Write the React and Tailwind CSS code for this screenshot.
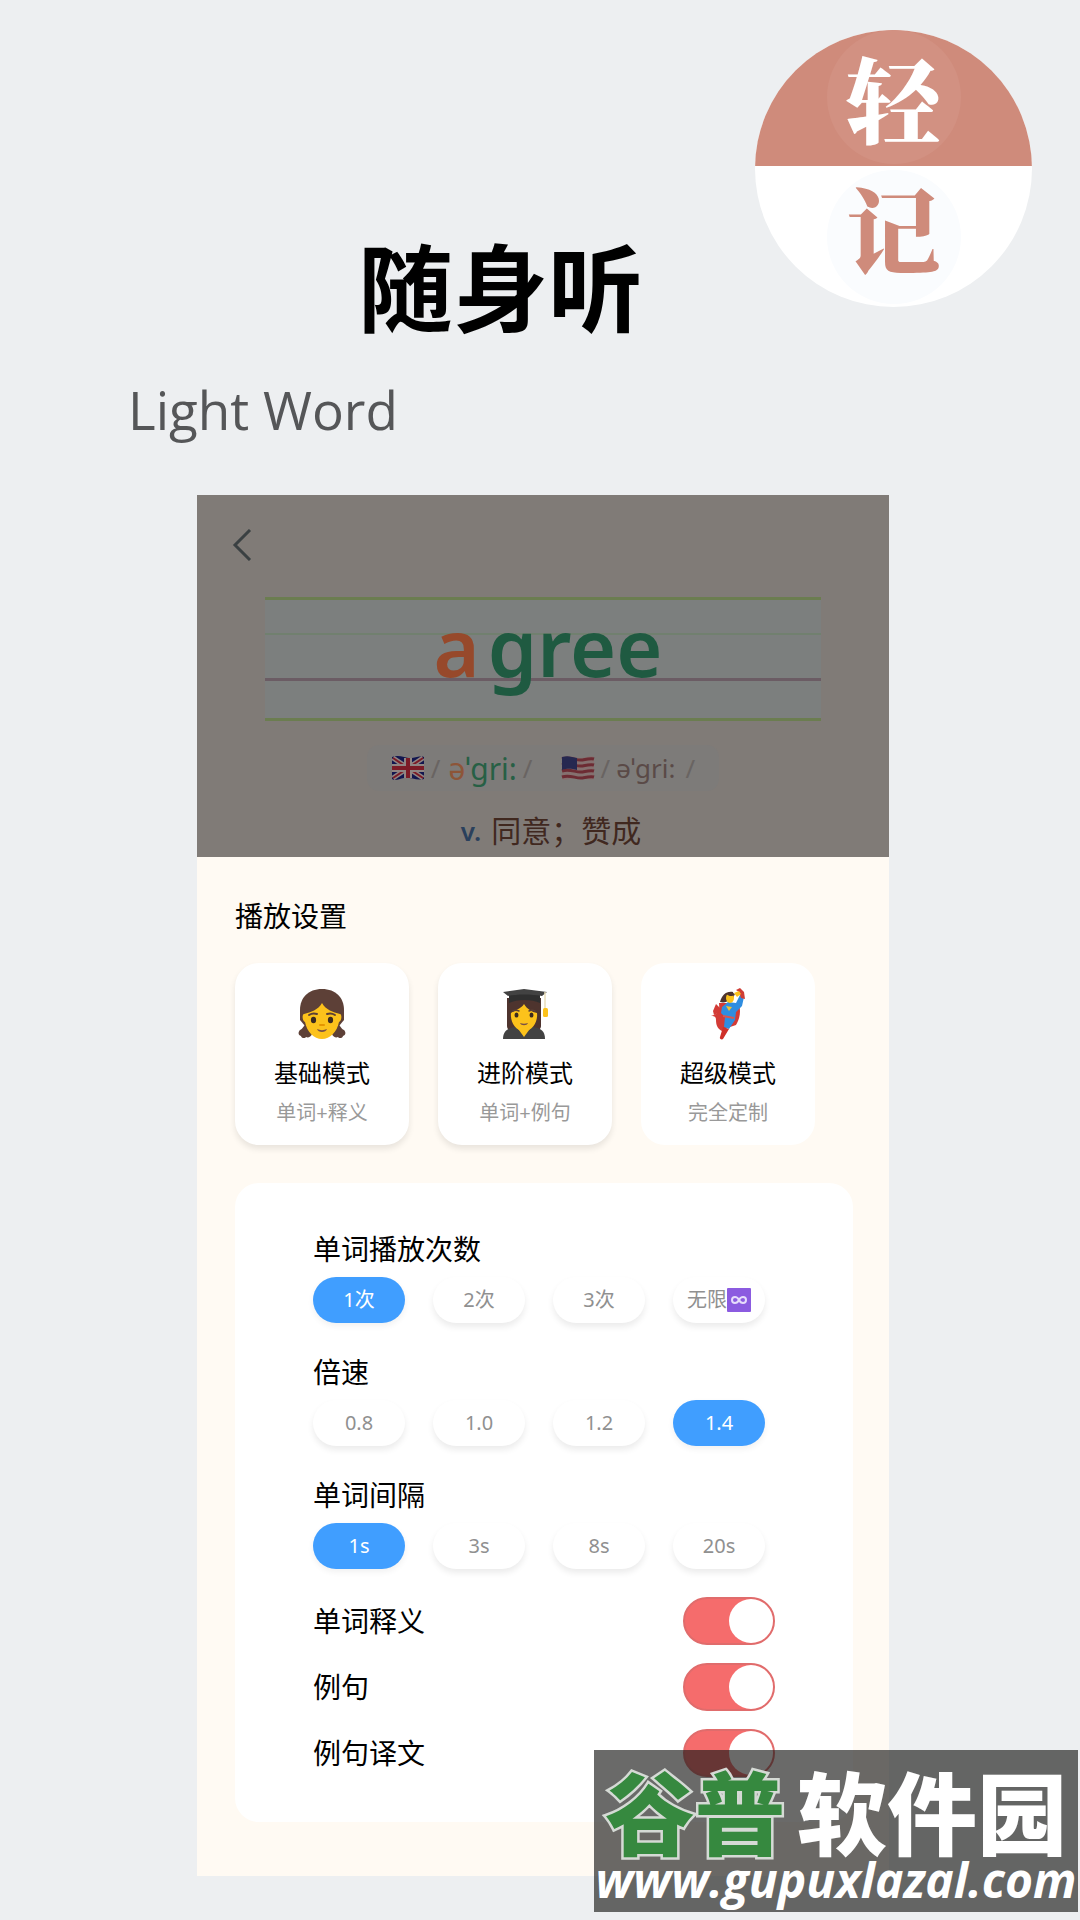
import React, { useState } from 'react';

const GirlIcon = () => (
    <svg viewBox="0 0 52 52" className="h-[52px] w-[52px]" aria-hidden="true">
        <path d="M4 42c3-1 4-6 7-6s6 6 5 10c-1 3-4 4-6 3-1 2-5 1-5-1-3-1-3-4-1-6z" fill="#5d4037" />
        <path d="M48 42c-3-1-4-6-7-6s-6 6-5 10c1 3 4 4 6 3 1 2 5 1 5-1 3-1 3-4 1-6z" fill="#5d4037" />
        <path d="M26 1C12 1 4 10 4 22v10l5 6h34l5-6V22C48 10 40 1 26 1z" fill="#5d4037" />
        <path d="M26 15c-4 7-11 9-18 11-2 0-2 7 1 8 2 10 9 17 17 17s15-7 17-17c3-1 3-8 1-8-7-2-14-4-18-11z" fill="#fcc21b" />
        <path d="M13 27c3-2 5-2 8-1M31 26c3-1 5-1 8 1" stroke="#5d4037" strokeWidth="2" fill="none" strokeLinecap="round" />
        <ellipse cx="17.500" cy="32" rx="2.600" ry="3.200" fill="#3b2a20" />
        <ellipse cx="34.500" cy="32" rx="2.600" ry="3.200" fill="#3b2a20" />
        <path d="M24 37h4" stroke="#e59600" strokeWidth="2" strokeLinecap="round" />
        <path d="M21 41c3 1.500 7 1.500 10 0-1 4-9 4-10 0z" fill="#795046" />
    </svg>
);

const StudentIcon = () => (
    <svg viewBox="0 0 52 52" className="h-[52px] w-[52px]" aria-hidden="true">
        <path d="M8 10h34v28c0 3-3 5-6 5H14c-4 0-6-2-6-5z" fill="#4e342e" />
        <path d="M4 51c0-8 5-11 12-12h18c8 1 12 4 12 12z" fill="#424242" />
        <path d="M17 38h16l-8 11z" fill="#fcc21b" />
        <path d="M25 16c-3 5-9 6-13 9-1 8 4 18 13 18s14-10 13-18c-5-1-10-4-13-9z" fill="#fcc21b" />
        <path d="M14 23c2-1 4-1 6 0M30 23c2-1 4-1 6 0" stroke="#5d4037" strokeWidth="1.500" fill="none" strokeLinecap="round" />
        <ellipse cx="17.500" cy="27" rx="2" ry="2.500" fill="#3b2a20" />
        <ellipse cx="32.500" cy="27" rx="2" ry="2.500" fill="#3b2a20" />
        <path d="M21 35c3 1 5 1 8 0-1 3-7 3-8 0z" fill="#795046" />
        <path d="M10 6h31v9c-8-4-23-4-31 0z" fill="#2f2f2f" />
        <path d="M4 4l21-3 23 3-5 4c-10-2-26-2-34 0z" fill="#424242" />
        <path d="M46 4v18" stroke="#e8dcb8" strokeWidth="1.500" />
        <rect x="44" y="20" width="5" height="9" rx="1.500" fill="#fcc21b" />
    </svg>
);

const HeroIcon = () => (
    <svg viewBox="0 0 52 52" className="h-[52px] w-[52px]" aria-hidden="true">
        <path d="M17 15c0 3 1 5-1 8-1 3-4 4-7 5 4 0 5 1 5 4 0 6 2 9 6 11l5-3 9-3c4-7 5-13 3-22z" fill="#d33b36" />
        <path d="M14 16l-3 7 1 4 4-2 3-4z" fill="#d33b36" />
        <path d="M31 4c-7-1-11 3-13 10 4 1 7 0 9-2l5-3z" fill="#4e342e" />
        <path d="M26 14l8 1 4-8 4 2-2 9-6 6-1 8-6 9-5-2 1-10-4-4 1-6z" fill="#2f8de0" />
        <path d="M37 4l-3-2 4-2 4 4 1 7-4-1z" fill="#cf3d35" />
        <path d="M32 5l5-2 2 3-4 3z" fill="#fcc21b" />
        <ellipse cx="28" cy="10" rx="4" ry="5" fill="#fcc21b" />
        <path d="M24 6c3-3 8-2 9 1-4 2-6 1-9-1z" fill="#4e342e" />
        <path d="M24 18l6 1-3 4z" fill="#f2c232" />
        <path d="M21 28l11 2" stroke="#d9574f" strokeWidth="2" />
        <path d="M21 39l6 2-6 10c-1 1-4 0-3-2z" fill="#cf3029" />
    </svg>
);

const UkFlag = () => (
    <svg viewBox="0 0 34 26" className="h-[26px] w-[34px]" role="img" aria-label="UK">
        <path d="M1 2c8-3 14 2 20 1 5-1 9-2 12-1v22c-8 2-13-2-20-1-5 1-9 3-12 1z" fill="#12164f" />
        <path d="M2 3l30 20M32 3L2 23" stroke="#8f8583" strokeWidth="5" />
        <path d="M2 3l30 20M32 3L2 23" stroke="#7c1b26" strokeWidth="2" />
        <path d="M17 3v20M1 13h32" stroke="#8f8583" strokeWidth="8" />
        <path d="M17 3v20M1 13h32" stroke="#7c1b26" strokeWidth="4" />
    </svg>
);

const UsFlag = () => (
    <svg viewBox="0 0 34 26" className="h-[26px] w-[34px]" role="img" aria-label="US">
        <path d="M1 2c8-3 14 2 20 1 5-1 9-2 12-1v22c-8 2-13-2-20-1-5 1-9 3-12 1z" fill="#85706f" />
        <path
            d="M1 4c8-3 14 2 20 1 5-1 9-2 12-1M1 10c8-3 14 2 20 1 5-1 9-2 12-1M1 16c8-3 14 2 20 1 5-1 9-2 12-1M1 22c8-3 14 2 20 1 5-1 9-2 12-1"
            stroke="#6d2b33"
            strokeWidth="3"
            fill="none"
        />
        <path d="M1 2c6-2 10 0 15 1v12c-5-1-9-2-15 0z" fill="#262850" />
    </svg>
);

const InfinityIcon = () => (
    <svg viewBox="0 0 24 24" className="h-6 w-6" role="img" aria-label="∞">
        <rect width="24" height="24" rx="1" fill="#8b5be0" />
        <path
            d="M12 12c-1-2-2-3-4-3a3 3 0 0 0 0 6c2 0 3-1 4-3s2-3 4-3a3 3 0 0 1 0 6c-2 0-3-1-4-3z"
            fill="none"
            stroke="#e6dcfb"
            strokeWidth="2"
        />
    </svg>
);

const modes = [
    { id: 'basic', name: '基础模式', desc: '单词+释义', icon: GirlIcon, raised: true },
    { id: 'advanced', name: '进阶模式', desc: '单词+例句', icon: StudentIcon, raised: true },
    { id: 'super', name: '超级模式', desc: '完全定制', icon: HeroIcon, raised: false }
];

const optionGroups = [
    { key: 'times', title: '单词播放次数', options: ['1次', '2次', '3次', '无限'] },
    { key: 'speed', title: '倍速', options: ['0.8', '1.0', '1.2', '1.4'] },
    { key: 'interval', title: '单词间隔', options: ['1s', '3s', '8s', '20s'] }
];

const switches = [
    { key: 'meaning', label: '单词释义' },
    { key: 'sentence', label: '例句' },
    { key: 'translation', label: '例句译文' }
];

const Logo = () => (
    <div className="flex h-[277px] w-[277px] shrink-0 flex-col overflow-hidden rounded-full bg-white text-[94px] font-black font-['Noto_Serif_CJK_SC','Noto_Sans_CJK_SC',serif]">
        <div className="flex h-[136px] justify-center bg-[#cf8b7b] text-white">
            <span className="h-[134px] w-[134px] rounded-full bg-[#d29182] text-center leading-[134px]">轻</span>
        </div>
        <div className="flex flex-1 justify-center pt-1 text-[#cf8b7b]">
            <span className="h-[134px] w-[134px] rounded-full bg-[#fafcfe] text-center leading-[116px]">记</span>
        </div>
    </div>
);

const WordPanel = () => (
    <section className="bg-[#807b77] px-[34px] pt-[34px] pb-[6px]">
        <button type="button" aria-label="返回" className="block h-8 w-6">
            <svg viewBox="0 0 24 32" className="h-8 w-6" fill="none" stroke="#3a4042" strokeWidth="3">
                <path d="M19 1L4 16l15 15" />
            </svg>
        </button>

        <div className="relative mx-[34px] mt-9 h-[124px] bg-[#7c7f7e]">
            <div className="absolute inset-0 flex flex-col border-y-3 border-[#6b7d50]">
                <div className="h-[35px] border-b-2 border-[#71806f]" />
                <div className="h-[46px] border-b-3 border-[#6b5c64]" />
            </div>
            <h2 className="relative flex justify-center gap-2 pl-[10px] text-[79px] leading-[100px] font-semibold text-[#1f5a41]">
                <span className="text-[#97492b]">a</span>
                <span>gree</span>
            </h2>
        </div>

        <div className="mx-auto mt-6 flex h-[46px] w-fit items-center rounded-xl bg-[#7d7b79] px-6 text-[26px] text-[#5a4a47]">
            <UkFlag />
            <span className="ml-[6px] text-[#696462]">/</span>
            <span className="ml-2 text-[30px] text-[#276045]"><span className="text-[#8d5538]">ə</span>ˈgri:</span>
            <span className="ml-[6px] text-[#696462]">/</span>
            <span className="ml-[28px] flex"><UsFlag /></span>
            <span className="ml-[6px] text-[#696462]">/</span>
            <span className="ml-[6px]">əˈgri:</span>
            <span className="ml-[10px] text-[#696462]">/</span>
        </div>

        <p className="mt-[20px] flex justify-center gap-[10px] pl-4 text-[30px] leading-10 text-[#40281f]">
            <span className="text-[26px] font-semibold text-[#2a405c]">v.</span>
            <span>同意；赞成</span>
        </p>
    </section>
);

const OptionGroup = ({ group, value, onSelect }) => (
    <div role="group" aria-label={group.title}>
        <h3 className="text-[28px] leading-10">{group.title}</h3>
        <div className="mt-2 flex gap-7">
            {group.options.map(option => (
                <button
                    key={option}
                    type="button"
                    aria-pressed={value === option}
                    onClick={() => onSelect(option)}
                    className={`flex h-[46px] w-[92px] items-center justify-center rounded-full text-[20px] whitespace-nowrap ${
                        value === option
                            ? 'bg-[#409eff] text-white shadow-[0_3px_6px_rgba(0,0,0,0.06)]'
                            : 'bg-white text-[#909090] shadow-[0_4px_6px_rgba(0,0,0,0.08)]'
                    }`}
                >
                    {option}
                    {option === '无限' && <InfinityIcon />}
                </button>
            ))}
        </div>
    </div>
);

const Watermark = () => (
    <div className="absolute right-[2px] bottom-2 flex h-[162px] w-[484px] flex-col items-center bg-[#1a1a18]/65 pt-[18px] text-white">
        <p className="flex gap-3 text-[90px] leading-[90px] font-black">
            <span className="text-[#36893f] [-webkit-text-stroke:5px_#d5dad5] [paint-order:stroke_fill]">谷普</span>
            <span>软件园</span>
        </p>
        <p className="text-[48px] leading-[44px] font-bold italic font-['Open_Sans',sans-serif]">www.gupuxlazal.com</p>
    </div>
);

const App = () => {
    const [mode, setMode] = useState('super');
    const [selected, setSelected] = useState({ times: '1次', speed: '1.4', interval: '1s' });
    const [enabled, setEnabled] = useState({ meaning: true, sentence: true, translation: true });

    return (
        <div className="relative min-h-screen bg-[#edeff1] pb-11 text-black font-['Noto_Sans','Noto_Sans_CJK_SC',sans-serif]">
            <header className="flex h-[495px] justify-between pr-12">
                <div className="pt-[238px] pl-[128px]">
                    <h1 className="ml-[230px] text-[95px] leading-[100px] font-bold">随身听</h1>
                    <p className="mt-9 text-[53px] leading-[72px] text-[#555658] font-['Open_Sans',sans-serif]">Light Word</p>
                </div>
                <div className="pt-[30px]">
                    <Logo />
                </div>
            </header>

            <main className="mr-[191px] ml-[197px] bg-[#fffaf3]">
                <WordPanel />

                <section className="pt-[39px] pr-9 pb-[54px] pl-[38px]">
                    <h2 className="text-[28px] leading-10">播放设置</h2>

                    <div className="mt-[27px] flex gap-[29px]">
                        {modes.map(item => (
                            <button
                                key={item.id}
                                type="button"
                                aria-pressed={mode === item.id}
                                onClick={() => setMode(item.id)}
                                className={`flex w-[174px] flex-col items-center rounded-3xl bg-white pt-[25px] pb-[18px] ${
                                    item.raised ? 'shadow-[0_4px_6px_rgba(0,0,0,0.09)]' : ''
                                }`}
                            >
                                <item.icon />
                                <span className="mt-[17px] text-[24px] leading-8">{item.name}</span>
                                <span className="mt-[10px] text-[20px] leading-7 text-[#999999]">{item.desc}</span>
                            </button>
                        ))}
                    </div>

                    <div className="mt-[38px] rounded-3xl bg-white px-[78px] pt-[46px] pb-9">
                        <div className="flex flex-col gap-[29px]">
                            {optionGroups.map(group => (
                                <OptionGroup
                                    key={group.key}
                                    group={group}
                                    value={selected[group.key]}
                                    onSelect={option => setSelected(prev => ({ ...prev, [group.key]: option }))}
                                />
                            ))}
                        </div>

                        <div className="mt-[19px]">
                            {switches.map(item => (
                                <label key={item.key} className="flex h-[66px] items-center justify-between text-[28px]">
                                    {item.label}
                                    <input
                                        type="checkbox"
                                        role="switch"
                                        checked={enabled[item.key]}
                                        onChange={() => setEnabled(prev => ({ ...prev, [item.key]: !prev[item.key] }))}
                                        className="h-12 w-[92px] appearance-none rounded-full border-2 border-[#dcdfe6] bg-[#dcdfe6] before:block before:h-11 before:w-11 before:rounded-full before:bg-white checked:border-[#e06c6c] checked:bg-[#f56c6c] checked:before:ml-11"
                                    />
                                </label>
                            ))}
                        </div>
                    </div>
                </section>
            </main>

            <Watermark />
        </div>
    );
};

export default App;
